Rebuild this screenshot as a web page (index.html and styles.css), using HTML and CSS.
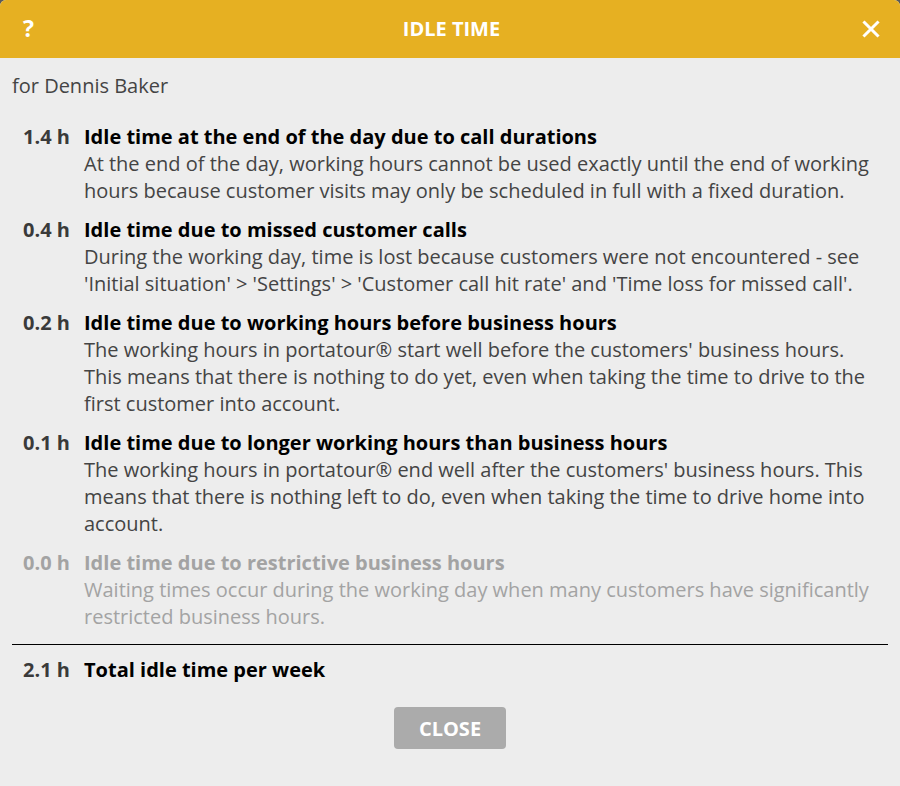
FILE: index.html
```html
<!DOCTYPE html>
<html lang="en">
<head>
  <meta charset="UTF-8" />
  <title>Idle Time</title>
  <link rel="stylesheet" href="styles.css">
</head>
<body>
  <div class="dialog">
    <header class="dialog-header">
      <span class="help">?</span>
      <h1>IDLE TIME</h1>
      <span class="close-x">
        <svg width="18" height="18" viewBox="0 0 18 18"><path d="M2.5 2.5 L15.5 15.5 M15.5 2.5 L2.5 15.5" stroke="#fff" stroke-width="3" stroke-linecap="square"/></svg>
      </span>
    </header>

    <div class="dialog-body">
      <p class="subtitle">for Dennis Baker</p>

      <ul class="idle-list">
        <li class="idle-row">
          <span class="hours">1.4 h</span>
          <div class="info">
            <div class="title">Idle time at the end of the day due to call durations</div>
            <div class="desc">At the end of the day, working hours cannot be used exactly until the end of working hours because customer visits may only be scheduled in full with a fixed duration.</div>
          </div>
        </li>
        <li class="idle-row">
          <span class="hours">0.4 h</span>
          <div class="info">
            <div class="title">Idle time due to missed customer calls</div>
            <div class="desc">During the working day, time is lost because customers were not encountered - see 'Initial situation' &gt; 'Settings' &gt; 'Customer call hit rate' and 'Time loss for missed call'.</div>
          </div>
        </li>
        <li class="idle-row">
          <span class="hours">0.2 h</span>
          <div class="info">
            <div class="title">Idle time due to working hours before business hours</div>
            <div class="desc">The working hours in portatour® start well before the customers' business hours. This means that there is nothing to do yet, even when taking the time to drive to the first customer into account.</div>
          </div>
        </li>
        <li class="idle-row">
          <span class="hours">0.1 h</span>
          <div class="info">
            <div class="title">Idle time due to longer working hours than business hours</div>
            <div class="desc">The working hours in portatour® end well after the customers' business hours. This means that there is nothing left to do, even when taking the time to drive home into account.</div>
          </div>
        </li>
        <li class="idle-row muted">
          <span class="hours">0.0 h</span>
          <div class="info">
            <div class="title">Idle time due to restrictive business hours</div>
            <div class="desc">Waiting times occur during the working day when many customers have significantly restricted business hours.</div>
          </div>
        </li>
      </ul>

      <div class="idle-row total">
        <span class="hours">2.1 h</span>
        <div class="info">
          <div class="title">Total idle time per week</div>
        </div>
      </div>

      <div class="actions">
        <button class="close-btn">CLOSE</button>
      </div>
    </div>
  </div>
</body>
</html>
```

FILE: styles.css
```css
:root {
  --header-color: #e6b022;
  --body-color: #ededed;
  --text-color: #444;
  --muted-color: #a3a3a3;
}

* {
  box-sizing: border-box;
}

html {
  background: #5a5a5a;
}

body {
  margin: 0;
  font-family: 'Open Sans', 'Noto Sans', sans-serif;
  font-size: 20px;
  line-height: 27px;
  color: var(--text-color);
}

.dialog {
  width: 900px;
  height: 786px;
  background: var(--body-color);
  border-radius: 6px 6px 0 0;
  overflow: hidden;
}

.dialog-header {
  height: 58px;
  background: var(--header-color);
  color: #fff;
  display: flex;
  align-items: center;
  justify-content: space-between;
  padding: 0 20px 2px 23px;
}

.dialog-header h1 {
  margin: 0;
  font-size: 20px;
  font-weight: bold;
}

.help {
  font-size: 23px;
  font-weight: bold;
  width: 18px;
}

.close-x {
  width: 18px;
  height: 18px;
  display: flex;
  margin-top: 2px;
}

.dialog-body {
  padding: 14px 12px 0;
}

.subtitle {
  margin: 0;
}

.idle-list {
  list-style: none;
  margin: 24px 0 0;
  padding: 0;
}

.idle-row {
  display: flex;
  gap: 14px;
  margin-bottom: 12px;
}

.hours {
  width: 58px;
  flex: none;
  text-align: right;
  font-weight: bold;
  color: #3a3a3a;
}

.info {
  padding-right: 16px;
}

.title {
  font-weight: bold;
  color: #000;
}

.muted .hours,
.muted .title,
.muted .desc {
  color: var(--muted-color);
}

.total {
  border-top: 1px solid #000;
  margin-top: 14px;
  padding-top: 11px;
  margin-bottom: 0;
}

.actions {
  display: flex;
  justify-content: center;
  margin-top: 24px;
}

.close-btn {
  width: 112px;
  height: 42px;
  border: none;
  border-radius: 4px;
  background: #ababab;
  color: #fff;
  font-family: inherit;
  font-size: 20px;
  font-weight: bold;
  cursor: pointer;
}
```
